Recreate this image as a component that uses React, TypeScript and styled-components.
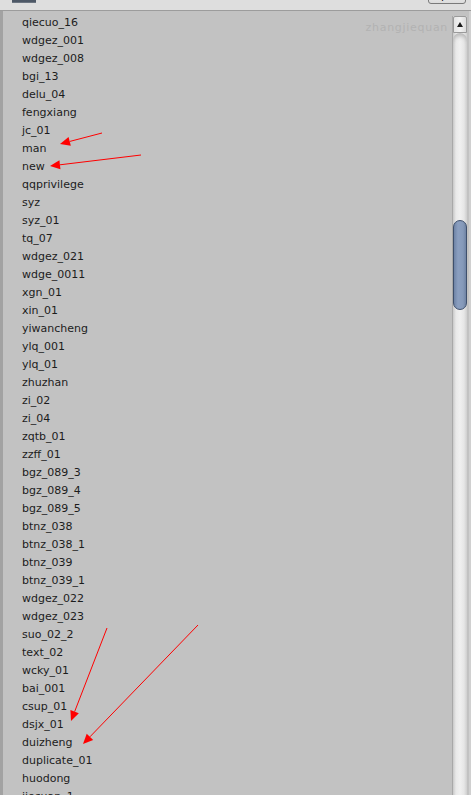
import React from "react";
import styled, { createGlobalStyle } from "styled-components";

const Global = createGlobalStyle`
  html, body { margin: 0; padding: 0; background: #c2c2c2; overflow: hidden; }
  #root { width: 471px; height: 795px; }
`;

const items = [
  "qiecuo_16","wdgez_001","wdgez_008","bgi_13","delu_04","fengxiang","jc_01","man","new",
  "qqprivilege","syz","syz_01","tq_07","wdgez_021","wdge_0011","xgn_01","xin_01","yiwancheng",
  "ylq_001","ylq_01","zhuzhan","zi_02","zi_04","zqtb_01","zzff_01","bgz_089_3","bgz_089_4",
  "bgz_089_5","btnz_038","btnz_038_1","btnz_039","btnz_039_1","wdgez_022","wdgez_023","suo_02_2",
  "text_02","wcky_01","bai_001","csup_01","dsjx_01","duizheng","duplicate_01","huodong","jiesuan_1",
];

const Window = styled.div`
  position: relative;
  width: 471px;
  height: 795px;
  display: flex;
  flex-direction: column;
  overflow: hidden;
  font-family: "DejaVu Sans", Verdana, sans-serif;
`;

const Toolbar = styled.div`
  height: 10px;
  flex: none;
  background: #dedede;
  border-bottom: 1px solid #9c9c9c;
  display: flex;
  align-items: flex-start;
  justify-content: space-between;
  padding: 0 5px 0 12px;
  overflow: hidden;
`;

const IconStub = styled.div`
  width: 24px;
  height: 2px;
  background: #4d5866;
  border-bottom: 1px solid #6b7480;
`;

const OpenButton = styled.div`
  margin-top: -12px;
  width: 36px;
  height: 14px;
  border: 1px solid #7a7a7a;
  border-radius: 3px;
  background: linear-gradient(#f4f4f4, #dcdcdc);
  font-size: 11px;
  line-height: 13px;
  text-align: center;
  color: #111;
`;

const Body = styled.div`
  flex: 1;
  display: flex;
  border-left: 3px solid #a2a2a2;
  background: #c2c2c2;
  min-height: 0;
`;

const List = styled.div`
  position: relative;
  flex: 1;
  padding: 3px 0 0 19px;
  display: flex;
  flex-direction: column;
`;

const Row = styled.div`
  height: 18px;
  line-height: 18px;
  font-size: 11px;
  color: #1c1c1c;
  white-space: nowrap;
`;

const Watermark = styled.div`
  position: absolute;
  right: 4px;
  top: 10px;
  font-family: "DejaVu Sans", Verdana, sans-serif;
  font-size: 11px;
  letter-spacing: 0.7px;
  color: #b2b2b2;
`;

const Scrollbar = styled.div`
  width: 14px;
  margin: 5px 2px 0 0;
  display: flex;
  flex-direction: column;
  border-left: 1px solid #a8a8a8;
  background: linear-gradient(90deg, #c9c9c9 0px, #e9e9e9 3px, #f0f0f0 7px, #e6e6e6 11px, #cfcfcf 14px);
`;

const ArrowButton = styled.div`
  height: 17px;
  flex: none;
  background: linear-gradient(90deg, #e4e4e4, #f2f2f2 50%, #dcdcdc);
  border: 1px solid #9a9a9a;
  border-radius: 2px 2px 0 0;
  display: flex;
  align-items: center;
  justify-content: center;
  box-sizing: border-box;
`;

const Tri = styled.div`
  width: 0;
  height: 0;
  border-left: 3px solid transparent;
  border-right: 3px solid transparent;
  border-bottom: 5px solid #1a1a1a;
`;

const TrackTop = styled.div`
  height: 187px;
  flex: none;
  border-radius: 7px 7px 0 0;
  box-shadow: inset 0 6px 4px -3px #b8b8b8;
`;

const Thumb = styled.div`
  height: 90px;
  flex: none;
  box-sizing: border-box;
  border: 1px solid #3e4f6c;
  border-radius: 7px;
  background: linear-gradient(90deg, #6f84a6 0px, #8b9fc0 4px, #8599b9 9px, #677b9c 13px);
`;

const RightEdge = styled.div`
  width: 2px;
  background: #d0d0d0;
`;

const Annotations = styled.svg`
  position: absolute;
  left: 0;
  top: 0;
  pointer-events: none;
`;

const arrows: [number, number, number, number][] = [
  [102, 133, 60, 144],
  [141, 155, 50, 166],
  [107, 628, 71, 721],
  [198, 625, 83, 744],
];

function Arrow({ x1, y1, x2, y2 }: { x1: number; y1: number; x2: number; y2: number }) {
  const dx = x2 - x1;
  const dy = y2 - y1;
  const len = Math.hypot(dx, dy);
  const ux = dx / len;
  const uy = dy / len;
  const hl = 10;
  const hw = 4.5;
  const bx = x2 - ux * hl;
  const by = y2 - uy * hl;
  const px = -uy;
  const py = ux;
  return (
    <g>
      <line x1={x1} y1={y1} x2={bx} y2={by} stroke="#ff0000" strokeWidth={1} />
      <polygon
        points={`${x2},${y2} ${bx + px * hw},${by + py * hw} ${bx - px * hw},${by - py * hw}`}
        fill="#ff0000"
      />
    </g>
  );
}

export default function App() {
  return (
    <>
      <Global />
      <Window>
        <Toolbar>
          <IconStub />
          <OpenButton>Open</OpenButton>
        </Toolbar>
        <Body>
          <List>
            {items.map((t) => (
              <Row key={t}>{t}</Row>
            ))}
            <Watermark>zhangjiequan</Watermark>
          </List>
          <Scrollbar>
            <ArrowButton>
              <Tri />
            </ArrowButton>
            <TrackTop />
            <Thumb />
          </Scrollbar>
          <RightEdge />
        </Body>
        <Annotations width={471} height={795}>
          {arrows.map(([a, b, c, d], i) => (
            <Arrow key={i} x1={a} y1={b} x2={c} y2={d} />
          ))}
        </Annotations>
      </Window>
    </>
  );
}
